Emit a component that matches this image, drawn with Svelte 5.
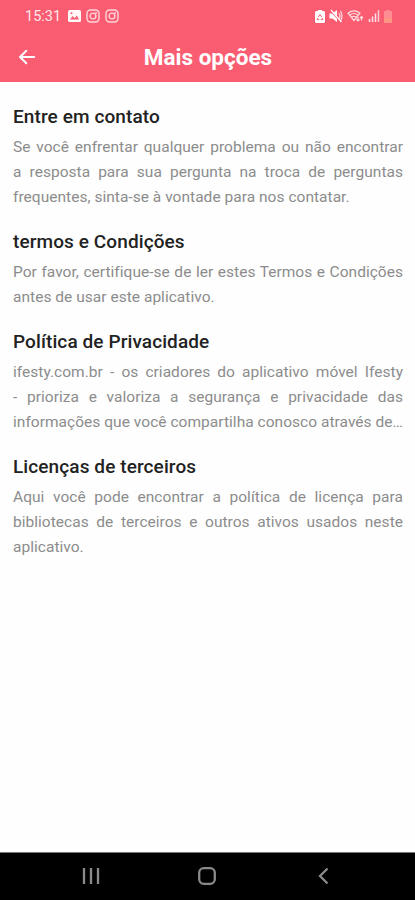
<script lang="ts">
	interface Option {
		readonly id: string;
		readonly title: string;
		/** Description rows; a row is stretched unless it closes the paragraph. */
		readonly lines: readonly string[];
		/** The description is cut off, so its last row fills the width too. */
		readonly clipped?: boolean;
	}

	const options: readonly Option[] = [
		{
			id: 'contact',
			title: 'Entre em contato',
			lines: [
				'Se você enfrentar qualquer problema ou não encontrar',
				'a resposta para sua pergunta na troca de perguntas',
				'frequentes, sinta-se à vontade para nos contatar.'
			]
		},
		{
			id: 'terms',
			title: 'termos e Condições',
			lines: [
				'Por favor, certifique-se de ler estes Termos e Condições',
				'antes de usar este aplicativo.'
			]
		},
		{
			id: 'privacy',
			title: 'Política de Privacidade',
			lines: [
				'ifesty.com.br - os criadores do aplicativo móvel Ifesty',
				'- prioriza e valoriza a segurança e privacidade das',
				'informações que você compartilha conosco através de…'
			],
			clipped: true
		},
		{
			id: 'licenses',
			title: 'Licenças de terceiros',
			lines: [
				'Aqui você pode encontrar a política de licença para',
				'bibliotecas de terceiros e outros ativos usados neste',
				'aplicativo.'
			]
		}
	];
</script>

<div class="screen">
	<header>
		<div class="status">
			<span class="clock">15:31</span>
			<svg class="photo" width="13" height="12" viewBox="0 0 13 12" aria-hidden="true">
				<rect width="13" height="12" rx="1.5" fill="#fff" />
				<path d="M2 9.5 4.7 6l2 2.2L8.8 5.5 11 9.5z" fill="#fa5c72" />
				<circle cx="3.5" cy="3.2" r="1" fill="#fa5c72" />
			</svg>
			{#each [0, 1] as n (n)}
				<svg class="insta" width="14" height="14" viewBox="0 0 14 14" aria-hidden="true">
					<rect x="1" y="1" width="12" height="12" rx="3.5" />
					<circle cx="7" cy="7" r="2.9" />
					<circle cx="10.3" cy="3.7" r=".3" />
				</svg>
			{/each}
			<div class="system">
				<svg width="10" height="13" viewBox="0 0 10 13" aria-hidden="true">
					<path d="M3 0h4v1h1.5Q10 1 10 2.5v9Q10 13 8.5 13h-7Q0 13 0 11.5v-9Q0 1 1.5 1H3z" fill="#fff" />
					<path d="M3.2 7 5 4.5 6.8 7M2.8 8l-.5 1.7h2M7.2 8l.5 1.7h-2" fill="none" stroke="#fa5c72" />
				</svg>
				<svg width="14" height="14" viewBox="0 0 14 14" aria-hidden="true">
					<path d="M.5 4.5h3L8 1v12L3.5 9.5h-3z" fill="#fff" />
					<path d="M10 4q2 3 0 6M11.5 2q3 5 0 10" fill="none" stroke="#fff" stroke-width="1.3" opacity=".75" />
					<path d="m1 1 11 12" stroke="#fa5c72" stroke-width="1.6" />
					<path d="m2 1 10.5 12" stroke="#fff" stroke-width="1.2" />
				</svg>
				<svg width="17" height="14" viewBox="0 0 17 14" aria-hidden="true">
					<g fill="none" stroke="#fff" stroke-width="1.2" opacity=".8">
						<path d="M1 4.2q6-4.5 12 0L7 11.5zM3 6q4-3 8 0M5 8q2-1.5 4 0" />
						<path d="M11 12V8m-1.5 2.5L11 12l1.5-1.5M14.5 7.5v4M13 9l1.500-1.500L16 9" />
					</g>
				</svg>
				<svg width="12" height="14" viewBox="0 0 12 14" aria-hidden="true">
					<path d="M1.5 10v3M4.5 7.5V13M7.5 4.5V13" stroke="#fff" stroke-width="1.6" opacity=".8" />
					<path d="M10.5 1v12" stroke="#fff" stroke-width="1.5" opacity=".7" />
				</svg>
				<svg width="8" height="13" viewBox="0 0 8 13" aria-hidden="true">
					<path d="M2.5 0h3v1H7q1 0 1 1v10q0 1-1 1H1q-1 0-1-1V2q0-1 1-1h1.5z" fill="#fd8d92" />
					<path d="M0 8h8v4q0 1-1 1H1q-1 0-1-1z" fill="#ff9683" />
				</svg>
			</div>
		</div>
		<div class="bar">
			<button type="button" class="back" aria-label="Voltar">
				<svg width="18" height="18" viewBox="0 0 18 18" aria-hidden="true">
					<path d="M16.2 9H2M8.3 2.700 2 9l6.300 6.300" />
				</svg>
			</button>
			<h1>Mais opções</h1>
		</div>
	</header>

	<main>
		{#each options as option (option.id)}
			<section>
				<h2>{option.title}</h2>
				<p class:clipped={option.clipped}>
					{#each option.lines as line}
						<span>{line}</span>
					{/each}
				</p>
			</section>
		{/each}
	</main>

	<nav>
		<svg viewBox="0 0 18 18" aria-hidden="true">
			<path d="M2 1v16M9 1v16M16 1v16" />
		</svg>
		<svg viewBox="0 0 18 18" aria-hidden="true">
			<rect x="1.2" y="1.2" width="15.6" height="15.6" rx="4.6" />
		</svg>
		<svg viewBox="0 0 18 18" aria-hidden="true">
			<path d="M13.500 1.500 6 9l7.500 7.500" />
		</svg>
	</nav>
</div>

<style>
	:global(body) {
		margin: 0;
		background: #fff;
	}
	.screen {
		height: 900px;
		display: flex;
		flex-direction: column;
		font-family: Roboto, 'Liberation Sans', sans-serif;
		background: #fefefe;
		overflow: hidden;
	}
	header {
		box-sizing: border-box;
		height: 82px;
		flex: none;
		color: #fff;
		background: #fa5c72;
	}
	.status {
		height: 32px;
		display: flex;
		align-items: center;
		padding: 0 23px 0 25px;
	}
	.clock {
		width: 43px;
		padding-top: 1px;
		font-size: 14.5px;
		opacity: 0.85;
	}
	.photo {
		margin-right: 5px;
		opacity: 0.95;
	}
	.insta {
		margin-right: 4.5px;
		fill: none;
		stroke: #fff;
		stroke-width: 1.4;
		opacity: 0.75;
	}
	.system {
		display: flex;
		align-items: center;
		gap: 4px;
		margin-left: auto;
	}
	.system svg {
		flex: none;
	}
	.bar {
		height: 50px;
		display: grid;
		grid-template-columns: 52px 1fr 52px;
		align-items: center;
	}
	.back {
		display: flex;
		margin: 0 0 0 18px;
		padding: 0;
		border: 0;
		background: none;
		cursor: pointer;
	}
	.back path {
		fill: none;
		stroke: #fff;
		stroke-width: 2;
		stroke-linecap: round;
		stroke-linejoin: round;
	}
	h1 {
		margin: 0;
		padding-left: 1px;
		text-align: center;
		font-size: 22.5px;
		line-height: 30px;
		font-weight: 700;
	}
	main {
		flex: 1;
		padding: 22px 12px 0 13px;
	}
	section {
		margin-bottom: 19px;
	}
	h2 {
		margin: 0;
		height: 31px;
		font-size: 19px;
		line-height: 26px;
		font-weight: 500;
		letter-spacing: 0.1px;
		color: #222;
	}
	p {
		margin: 0;
		font-size: 15.5px;
		line-height: 25px;
		color: #8c8c8c;
		letter-spacing: 0.03px;
	}
	p span {
		display: block;
		white-space: nowrap;
		text-align-last: justify;
	}
	p:not(.clipped) span:last-child {
		text-align-last: left;
	}
	nav {
		box-sizing: border-box;
		height: 48px;
		flex: none;
		display: flex;
		align-items: center;
		justify-content: space-between;
		padding: 0 83px 2px 82px;
		background: #000;
		border-top: 1px solid #777;
	}
	nav svg {
		width: 18px;
		height: 18px;
		fill: none;
		stroke: #8a8a8a;
		stroke-width: 2.3;
	}
</style>
